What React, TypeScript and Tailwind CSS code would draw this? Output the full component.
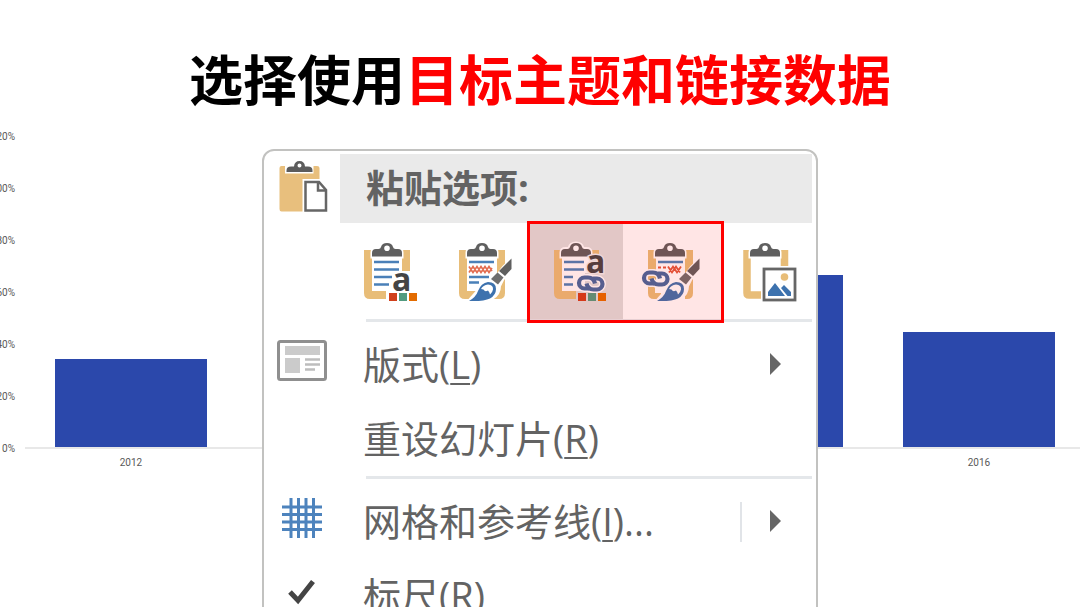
import type { ReactNode } from "react"

const percents = [120, 100, 80, 60, 40, 20, 0]

const bars = [
  { label: "2012", value: 34 },
  { label: "", value: 0 },
  { label: "", value: 0 },
  { label: "", value: 66.5 },
  { label: "2016", value: 44.5 },
]

const AXIS_MAX = 130

function Chart() {
  return (
    <div className="flex font-[Roboto,sans-serif] text-[10px] text-[#595959]">
      <div className="flex w-[15px] shrink-0 flex-col items-end">
        {percents.map((p) => (
          <span key={p} className="leading-[52px]">{p}%</span>
        ))}
      </div>
      <div className="-mr-[5px] ml-[10px] flex-1">
        <div className="grid h-[338px] grid-cols-5 items-end justify-items-center border-b-2 border-[#e8e8e8]">
          {bars.map((bar, i) => (
            <div
              key={i}
              className="w-[72%] bg-[#2b48ab]"
              style={{ height: `${(bar.value / AXIS_MAX) * 100}%` }}
            />
          ))}
        </div>
        <div className="grid grid-cols-5 pt-1 text-center text-[10px] leading-5">
          {bars.map((bar, i) => (
            <span key={i}>{bar.label}</span>
          ))}
        </div>
      </div>
    </div>
  )
}

function Clip() {
  return (
    <>
      <path
        d="M17 18V13.500Q17 9.500 21.500 9.500H25Q26 4 32 4Q38 4 39 9.500H42.500Q47 9.500 47 13.500V18Z"
        fill="#fff"
        stroke="#fff"
        strokeWidth="3"
      />
      <path
        fillRule="evenodd"
        d="M17 17.500V14Q17 10 21 10H23.500Q25.500 10 26 8Q27 4 32 4Q37 4 38 8Q38.500 10 40.500 10H43Q47 10 47 14V17.500ZM32 6.500A2.800 2.800 0 1 0 32 12.100A2.800 2.800 0 1 0 32 6.500Z"
        fill="#5f5f5f"
      />
    </>
  )
}

function Squares() {
  return (
    <>
      <path d="M34 54h8v8h-8z" fill="#d0401c" />
      <path d="M44 54h8v8h-8z" fill="#529b80" />
      <path d="M54 54h8v8h-8z" fill="#e36c00" />
    </>
  )
}

function Brush() {
  return (
    <>
      <path
        d="M62 19V29L53 41L50 47Q50 56 42 60Q36 63 18 62L27 52Q31 42 42 43L53 28Z"
        fill="#fff"
        stroke="#fff"
        strokeWidth="2"
      />
      <path d="M61.500 19.500V30L55 37L49 32Z" fill="#5f5f5f" />
      <path d="M47.500 33.500L53.500 38.500L48 45.500L41 40Z" fill="#6e6e6e" />
      <path d="M19 62Q26 58 28 52Q31 44 38 43Q46 43 46 50Q46 56 40 59.500Q34 62.500 19 62Z" fill="#3d72ae" />
      <path d="M31 50Q33 46 38 45.500Q43.500 46 43 50.500Q42.500 53.500 40 55.500Q39.500 53 38 51.500Q35 53.500 33.500 50.500Z" fill="#fff" />
    </>
  )
}

function Chain() {
  return (
    <g fill="none">
      <path
        d="M13 13.500H9.500A5.500 5.500 0 0 1 9.500 2.500H14C17 2.500 19 5 20 7.500M18 3.500H22A5.500 5.500 0 0 1 22 14.500H17.500C14.500 14.500 12.500 12 11.500 9.500"
        stroke="#fff"
        strokeWidth="7"
      />
      <path
        d="M14 13.500H9.500A5.500 5.500 0 0 1 9.500 2.500H13C16.500 2.500 19 4.500 20 8.500"
        stroke="#44699f"
        strokeWidth="4.200"
      />
      <path
        d="M17.500 3.500H22A5.500 5.500 0 0 1 22 14.500H18.500C15 14.500 12.500 12.500 11.500 8.500"
        stroke="#44699f"
        strokeWidth="4.200"
      />
    </g>
  )
}

function PasteIcon({ children }: { children: ReactNode }) {
  return (
    <svg viewBox="0 0 64 64" className="size-16" aria-hidden="true">
      {children}
    </svg>
  )
}

function DestinationTheme() {
  return (
    <PasteIcon>
      <path d="M13 11H51V59H13Z" fill="#fff" />
      <path d="M31 56H15Q13 56 13 54V11M51 11V32" fill="none" stroke="#e8bd78" strokeWidth="8" />
      <Clip />
      <path d="M19 23H44M19 30.500H44M19 38H37M19 45.500H34" stroke="#4a80b8" strokeWidth="2.500" />
      <text x="37" y="52" fontSize="32" fontWeight="700" fontFamily="Open Sans, sans-serif" fill="#444" stroke="#fff" strokeWidth="3" paintOrder="stroke">a</text>
      <Squares />
    </PasteIcon>
  )
}

function SourceFormat() {
  return (
    <PasteIcon>
      <path d="M13 11H51V59H13Z" fill="#fff" />
      <path d="M51 11V54Q51 56 49 56H15Q13 56 13 54V11" fill="none" stroke="#e8bd78" strokeWidth="8" />
      <Clip />
      <path d="M19 23H44M19 38H39M19 43.500H29" stroke="#4a80b8" strokeWidth="2.500" />
      <path d="M19 27.500l4 6 4-6 4 6 4-6 4 6 3-4.500M19 33.500l4-6 4 6 4-6 4 6 4-6 3 4.500" fill="none" stroke="#e26c50" strokeWidth="1.600" />
      <Brush />
    </PasteIcon>
  )
}

function LinkedDestinationTheme() {
  return (
    <PasteIcon>
      <path d="M14 11H51V59H14Z" fill="#fff" />
      <path d="M46 14H60V59H32V52H41V34H46Z" fill="#dfdedd" />
      <path d="M32 56H16Q14 56 14 54V11M51 11V17" fill="none" stroke="#e8bd78" strokeWidth="8" />
      <Clip />
      <path d="M20 23H40M20 30.500H40M20 38H29M20 45.500H29" stroke="#4a80b8" strokeWidth="2.500" />
      <text x="42" y="34" fontSize="32" fontWeight="700" fontFamily="Open Sans, sans-serif" fill="#444" stroke="#eee" strokeWidth="3" paintOrder="stroke">a</text>
      <g transform="translate(31 36)">
        <Chain />
      </g>
      <Squares />
    </PasteIcon>
  )
}

function LinkedSourceFormat() {
  return (
    <PasteIcon>
      <path d="M14 11H51V59H14Z" fill="#fff" />
      <path d="M51 11V54Q51 56 49 56H16Q14 56 14 54V11" fill="none" stroke="#e8bd78" strokeWidth="8" />
      <path d="M17 46H47V60H23V54H17Z" fill="#fff" />
      <Clip />
      <path d="M20 23H45" stroke="#4a80b8" strokeWidth="2.500" />
      <path d="M20 28.500H23M25 28.500H28M30 27.500l4 6 4-6 4 6M31 33.500l4-6 4 6 4-6" fill="none" stroke="#e0583c" strokeWidth="1.800" />
      <Brush />
      <g transform="translate(2 31)">
        <Chain />
      </g>
    </PasteIcon>
  )
}

function Picture() {
  return (
    <PasteIcon>
      <path d="M28 56H16Q14 56 14 54V11M51.500 11V27" fill="none" stroke="#e8bd78" strokeWidth="7.500" />
      <Clip />
      <rect x="31" y="30" width="31" height="31" fill="#fff" stroke="#666" strokeWidth="2.800" />
      <circle cx="51.500" cy="38" r="3.800" fill="#e8bd78" />
      <path d="M35 57V53L42 44L52 57ZM48 49L51 46L58 53V57H54.500Z" fill="#3d72ae" />
    </PasteIcon>
  )
}

function ClipboardIcon() {
  return (
    <svg viewBox="0 0 56 55" className="h-[55px] w-14" aria-hidden="true">
      <path d="M5.500 7Q5.500 5 7.500 5H11V12.500H39.500V5H43Q45.500 5 45.500 7V18H28.500V50.500H7.500Q5.500 50.500 5.500 48Z" fill="#e8bf7d" />
      <path
        fillRule="evenodd"
        d="M12.500 11V9.500Q12.500 5.500 17 5.500H20Q20.500 0 25.500 0T31 5.500H34Q38.500 5.500 38.500 9.500V11ZM25.500 2.500A2 2 0 1 0 25.500 6.500A2 2 0 1 0 25.500 2.500Z"
        fill="#5c5c5c"
      />
      <path d="M31.500 21H45L52 29V49.500H31.500Z" fill="#fff" stroke="#666" strokeWidth="2.500" />
      <path d="M44 21V29.500H52" fill="none" stroke="#666" strokeWidth="2.500" />
    </svg>
  )
}

function LayoutIcon() {
  return (
    <svg viewBox="0 0 50 42" className="h-[42px] w-[50px]" aria-hidden="true">
      <rect x="1.500" y="1.500" width="47" height="38" rx="2" fill="#fff" stroke="#8f8f8f" strokeWidth="3" />
      <path d="M8 6H43V15H8ZM8 18H23V33H8Z" fill="#cbcbcb" />
      <path d="M28 19.500H43M28 24.500H43M28 29.500H38" stroke="#bdbdbd" strokeWidth="2.500" />
    </svg>
  )
}

function GridIcon() {
  return (
    <svg viewBox="0 0 40 40" className="size-10" aria-hidden="true">
      <path d="M9 0V40M16.500 0V40M24 0V40M31.500 0V40M0 9H40M0 16.500H40M0 24H40M0 31.500H40" stroke="#4d83bd" strokeWidth="3" />
    </svg>
  )
}

function CheckIcon() {
  return (
    <svg viewBox="0 0 28 26" className="h-[26px] w-7" aria-hidden="true">
      <path d="M2 13L10 21.500L25 2.500" fill="none" stroke="#444" strokeWidth="5" />
    </svg>
  )
}

const pasteOptions = [
  { name: "使用目标主题", icon: <DestinationTheme /> },
  { name: "保留源格式", icon: <SourceFormat /> },
  { name: "使用目标主题和链接数据", icon: <LinkedDestinationTheme />, active: true },
  { name: "保留源格式和链接数据", icon: <LinkedSourceFormat /> },
  { name: "图片", icon: <Picture /> },
]

type MenuItemProps = {
  icon?: ReactNode
  text: string
  accessKey: string
  suffix?: string
  submenu?: boolean
  split?: boolean
}

function MenuItem({ icon, text, accessKey, suffix, submenu, split }: MenuItemProps) {
  return (
    <button type="button" role="menuitem" className="flex h-[74px] w-full items-center text-left">
      <span className="flex w-[76px] shrink-0 justify-center pb-2">{icon}</span>
      <span className="flex-1 pb-[2px] pl-[23px] text-[38px] leading-[52px] whitespace-nowrap">
        {text}(
        <span className="underline decoration-2 underline-offset-4">{accessKey}</span>
        ){suffix}
      </span>
      {split && <span className="mr-7 h-10 w-[2px] bg-[#e1e4e8]" />}
      {submenu && (
        <svg viewBox="0 0 12 22" className="mr-[30px] mb-[2px] h-[22px] w-3" aria-hidden="true">
          <path d="M0 0L11 11L0 22Z" fill="#666" />
        </svg>
      )}
    </button>
  )
}

function Separator() {
  return <div role="separator" className="mb-[6px] ml-[102px] h-[3px] bg-[#e4e7ea]" />
}

function ContextMenu() {
  return (
    <div
      role="menu"
      className="absolute top-[149px] left-1/2 w-[556px] -translate-x-1/2 rounded-[12px] border-2 border-[#c2c2c0] bg-white pt-[3px] pr-1 font-['Open_Sans','Noto_Sans_CJK_SC',sans-serif] text-[#636363]"
    >
      <div className="flex h-[69px]">
        <div className="flex w-[76px] shrink-0 items-center justify-center">
          <ClipboardIcon />
        </div>
        <div className="flex flex-1 items-center bg-[#eaeaea] pb-1 pl-[26px] text-[38px] leading-[52px] font-bold">
          粘贴选项:
        </div>
      </div>
      <div className="relative ml-[76px] grid h-24 grid-cols-5">
        {pasteOptions.map((option) => (
          <button
            key={option.name}
            type="button"
            aria-label={option.name}
            className={`flex items-center justify-center ${option.active ? "bg-[#dfdedd]" : ""}`}
          >
            {option.icon}
          </button>
        ))}
        <div className="pointer-events-none absolute -top-[2px] left-[187px] h-[102px] w-[197px] border-3 border-[#ff0000] bg-[#ff0000]/10" />
      </div>
      <Separator />
      <MenuItem icon={<LayoutIcon />} text="版式" accessKey="L" submenu />
      <MenuItem text="重设幻灯片" accessKey="R" />
      <Separator />
      <MenuItem icon={<GridIcon />} text="网格和参考线" accessKey="I" suffix="..." submenu split />
      <MenuItem icon={<CheckIcon />} text="标尺" accessKey="R" />
    </div>
  )
}

export default function App() {
  return (
    <main className="relative h-screen overflow-hidden bg-white">
      <h1 className="pt-[47px] pb-[2px] text-center font-['Noto_Sans_CJK_SC',sans-serif] text-[54px] leading-[62px] font-bold text-black">
        选择使用<span className="text-[#ff0000]">目标主题和链接数据</span>
      </h1>
      <Chart />
      <ContextMenu />
    </main>
  )
}
